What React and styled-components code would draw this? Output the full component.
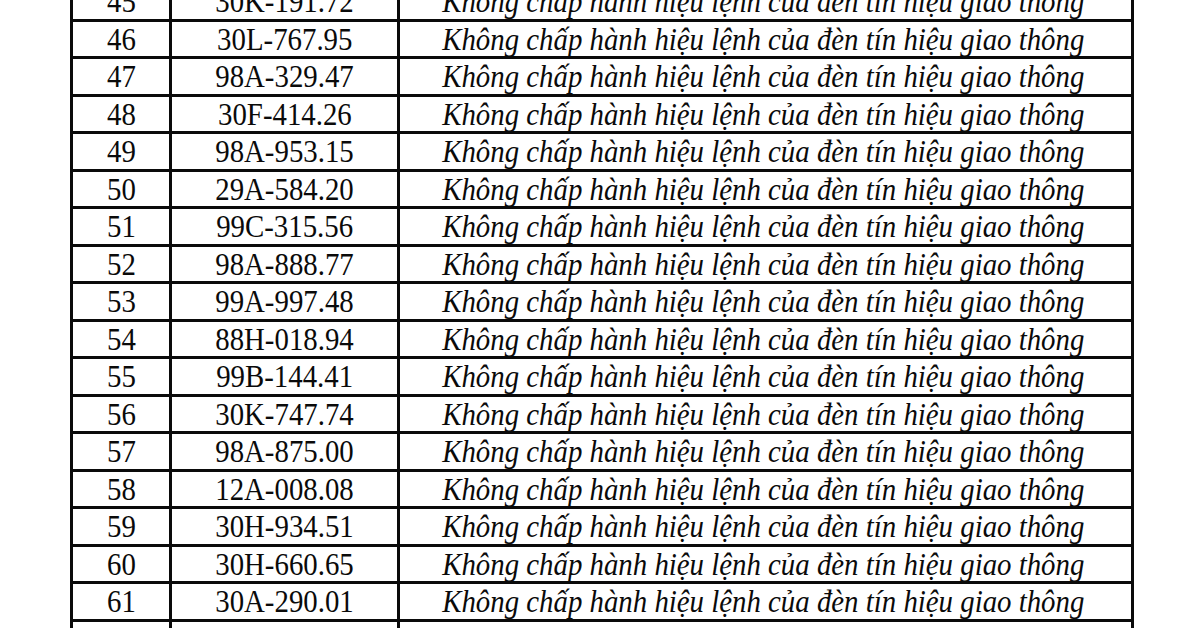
import React from "react";
import styled, { createGlobalStyle } from "styled-components";

const rows = [
	["45", "30K-191.72"],
	["46", "30L-767.95"],
	["47", "98A-329.47"],
	["48", "30F-414.26"],
	["49", "98A-953.15"],
	["50", "29A-584.20"],
	["51", "99C-315.56"],
	["52", "98A-888.77"],
	["53", "99A-997.48"],
	["54", "88H-018.94"],
	["55", "99B-144.41"],
	["56", "30K-747.74"],
	["57", "98A-875.00"],
	["58", "12A-008.08"],
	["59", "30H-934.51"],
	["60", "30H-660.65"],
	["61", "30A-290.01"],
	["", ""],
];

const VIOLATION = "Không chấp hành hiệu lệnh của đèn tín hiệu giao thông";

const App = () => {
	return (
		<Page>
			<GlobalStyle />
			<Table>
				<colgroup>
					<col style={{ width: 99 }} />
					<col style={{ width: 228 }} />
					<col />
				</colgroup>
				<tbody>
					{rows.map(([no, plate], i) => (
						<Row key={i}>
							<Cell>
								<Text>{no}</Text>
							</Cell>
							<Cell>
								<Text>{plate}</Text>
							</Cell>
							<Cell shift={4}>
								<Text italic>{plate ? VIOLATION : ""}</Text>
							</Cell>
						</Row>
					))}
				</tbody>
			</Table>
		</Page>
	);
};

export default App;

const GlobalStyle = createGlobalStyle`
	html, body {
		margin: 0;
		padding: 0;
		background: #ffffff;
		overflow: hidden;
	}
`;

const Page = styled.div`
	width: 1200px;
	height: 628px;
	overflow: hidden;
	padding-left: 70px;
	box-sizing: border-box;
	background: #ffffff;
`;

const Table = styled.table`
	margin-top: -19px;
	width: 1064px;
	table-layout: fixed;
	border-collapse: collapse;
	font-family: "Liberation Serif", "Times New Roman", serif;
	color: #0a0a0a;
`;

const Row = styled.tr`
	height: 37.5px;
`;

const Cell = styled.td`
	border: 3px solid #0a0a0a;
	padding: 0 ${(p) => p.shift || 0}px 0 0;
	text-align: center;
	vertical-align: middle;
	white-space: nowrap;
	overflow: hidden;
`;

// the scan is squeezed sideways a little, so the glyphs are taller than wide
const Text = styled.span`
	display: inline-block;
	font-size: 31px;
	line-height: 1;
	font-style: ${(p) => (p.italic ? "italic" : "normal")};
	transform: scaleX(0.93);
	transform-origin: center;
	padding-top: 1px;
`;
